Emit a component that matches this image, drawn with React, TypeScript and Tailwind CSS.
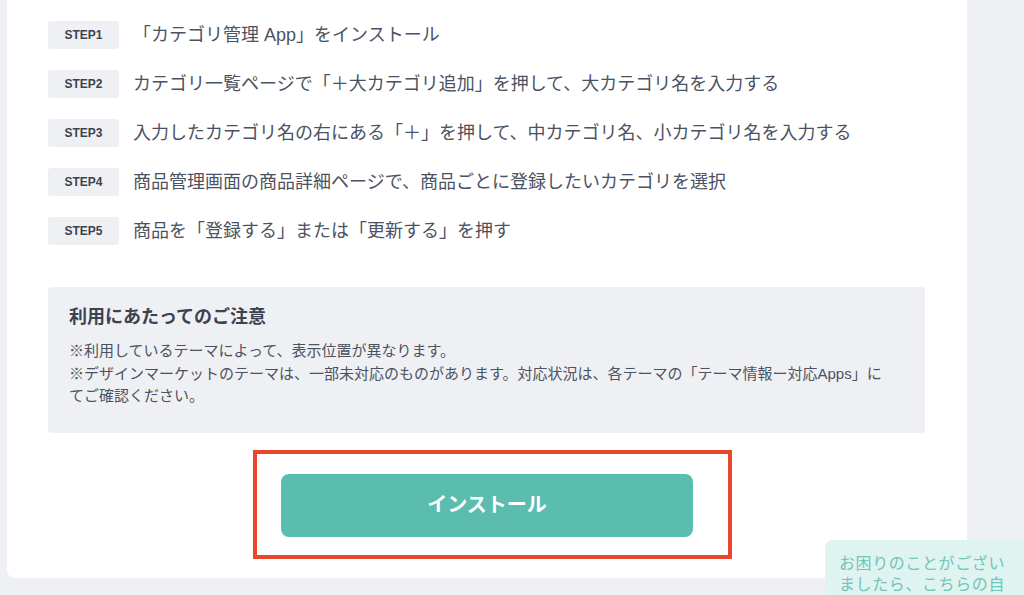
import React from 'react';

const steps = [
  { label: 'STEP1', text: '「カテゴリ管理 App」をインストール' },
  { label: 'STEP2', text: 'カテゴリ一覧ページで「＋大カテゴリ追加」を押して、大カテゴリ名を入力する' },
  { label: 'STEP3', text: '入力したカテゴリ名の右にある「＋」を押して、中カテゴリ名、小カテゴリ名を入力する' },
  { label: 'STEP4', text: '商品管理画面の商品詳細ページで、商品ごとに登録したいカテゴリを選択' },
  { label: 'STEP5', text: '商品を「登録する」または「更新する」を押す' },
];

export default function App() {
  return (
    <div
      className="relative h-[595px] w-full overflow-hidden bg-[#eff0f4]"
      style={{ fontFamily: '"Liberation Sans", "Noto Sans CJK JP", sans-serif' }}
    >
      {/* Main card */}
      <div className="ml-[7px] w-[960px] rounded-b-lg bg-white px-[41px] pb-[19px] pt-[21px]">
        {/* Steps */}
        <div className="flex flex-col gap-[21px]">
          {steps.map((s) => (
            <div key={s.label} className="flex items-center gap-[14px]">
              <span className="flex h-[28px] w-[71px] shrink-0 items-center justify-center rounded-[3px] bg-[#eff0f4] text-[12px] font-bold text-[#3b4250]">
                {s.label}
              </span>
              <span className="whitespace-nowrap text-[18px] leading-[28px] text-[#4b5262]">{s.text}</span>
            </div>
          ))}
        </div>

        {/* Notice */}
        <div className="mr-px mt-[42px] rounded-[4px] bg-[#eff0f4] px-[21px] pb-[25px] pt-[18px]">
          <h3 className="mb-[11px] text-[18px] font-bold leading-[24px] text-[#3b4250]">利用にあたってのご注意</h3>
          <p className="text-[15px] leading-[22.5px] text-[#4b5262]">
            ※利用しているテーマによって、表示位置が異なります。
            <br />
            ※デザインマーケットのテーマは、一部未対応のものがあります。対応状況は、各テーマの「テーマ情報ー対応Apps」に
            <br />
            てご確認ください。
          </p>
        </div>

        {/* Install button with highlight frame */}
        <div className="mt-[17px] flex justify-center pl-[11px]">
          <div className="border-4 border-[#e9462c] pb-[18px] pl-[24px] pr-[35px] pt-[20px]">
            <button className="flex h-[63px] w-[412px] items-center justify-center rounded-lg bg-[#5bbdb0] text-[20px] font-bold text-white">
              インストール
            </button>
          </div>
        </div>
      </div>

      {/* Help chat widget */}
      <div className="absolute left-[825px] top-[540px] w-[199px] rounded-tl-lg bg-[#dff3f1] pl-[14px] pr-[10px] pt-[13px]">
        <p className="text-[16px] leading-[21px] tracking-[0.6px] text-[#72c5b7]">
          お困りのことがございましたら、こちらの自動応答チャットをご利用ください。
        </p>
      </div>
    </div>
  );
}
